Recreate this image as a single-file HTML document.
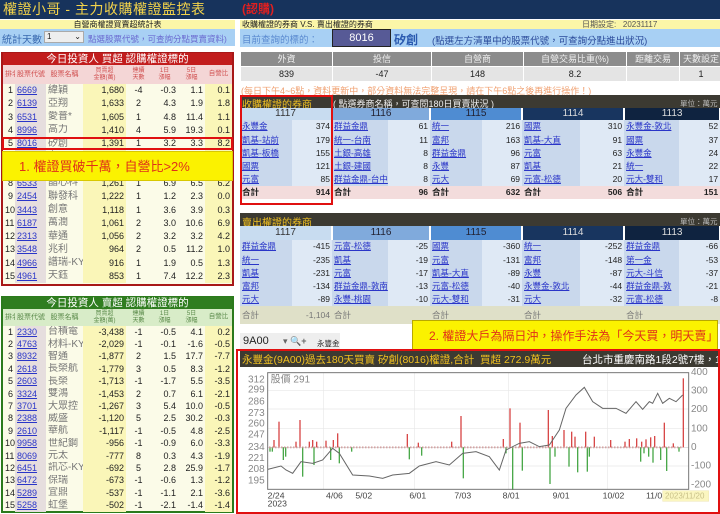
<!DOCTYPE html>
<html><head><meta charset="utf-8"><style>
*{margin:0;padding:0;box-sizing:border-box}
body{width:720px;height:514px;position:relative;overflow:hidden;background:#fff;font-family:"Liberation Sans","Noto Sans CJK TC",sans-serif;font-size:9px;color:#222}
.a{position:absolute}
table{border-collapse:collapse;table-layout:fixed}
td{padding:0 2px;white-space:nowrap;overflow:hidden;line-height:1}
.r{text-align:right}.c{text-align:center}
a{color:#2a35c8;text-decoration:underline}
.lt td{height:13.27px;font-size:9px}
.gt td{height:12.4px;font-size:9px}
.bk td{font-size:8.5px;height:13.2px}
.bk td.n{background:#c9d8ec}.bk td.v{background:#dfe9f5;text-align:right}
.bk tr.s td{background:#f3dcdc;font-weight:bold}
.sk tr.s td{background:#dfe0c8;color:#777;font-weight:normal}
</style></head><body>

<!-- title -->
<div class="a" style="left:0;top:0;width:720px;height:19px;background:#17335c"></div>
<div class="a" style="left:3px;top:1px;font-size:14px;line-height:17px;color:#f3d34a;letter-spacing:0.5px;white-space:nowrap">權證小哥 - 主力收購權證監控表</div>
<div class="a" style="left:242px;top:1px;font-size:12px;line-height:17px;color:#e02020;font-weight:bold">(認購)</div>

<!-- left top -->
<div class="a" style="left:0;top:20px;width:235px;height:9px;background:#fbf6a8;font-size:8px;line-height:9px;text-align:center">自營商權證買賣超統計表</div>
<div class="a" style="left:0;top:29px;width:235px;height:17px;background:#a8d0f4"></div>
<div class="a" style="left:2px;top:31px;font-size:10px;color:#3a6ab0">統計天數：</div>
<div class="a" style="left:44px;top:31px;width:40px;height:12px;background:#eee;border:1px solid #aaa;font-size:8px;padding-left:2px">1 <span style="float:right;padding-right:2px">⌄</span></div>
<div class="a" style="left:88px;top:33px;font-size:8.5px;color:#6a6ad0">點選股票代號，可查詢分點買賣資料)</div>

<!-- red table -->
<div class="a" style="left:1px;top:52px;width:233px;height:234px;border:2px solid #a81818;background:#fbfbe8"></div>
<div class="a" style="left:3px;top:53px;width:229px;height:12px;background:#c21d1d;color:#fff;font-size:10.5px;line-height:12px;text-align:center">今日投資人 買超 認購權證標的</div>
<table class="a lt" style="left:3px;top:65px;width:229px">
<colgroup><col style="width:12px"><col style="width:31px"><col style="width:37px"><col style="width:43px"><col style="width:25px"><col style="width:27px"><col style="width:27px"><col style="width:27px"></colgroup>
<tr style="background:#f4d6d6;color:#d05050;font-size:6.5px"><td style="height:19px;font-size:7px" class="c">排名</td><td class="c" style="font-size:7px">股票代號</td><td class="c" style="font-size:7px">股票名稱</td><td class="c" style="font-size:6px;line-height:1.1">買賣超<br>金額(萬)</td><td class="c" style="font-size:6px;line-height:1.1">連續<br>天數</td><td class="c" style="font-size:6px;line-height:1.1">1日<br>漲幅</td><td class="c" style="font-size:6px;line-height:1.1">5日<br>漲幅</td><td class="c" style="font-size:6.5px">自營比</td></tr>
<tbody id="rt"></tbody>
</table>
<div class="a" style="left:2px;top:137px;width:231px;height:13px;border:2px solid #e01010"></div>
<div class="a" style="left:2px;top:151px;width:231px;height:30px;background:#fbf200;border:1px solid #d8c800;color:#e0301a;font-size:13px;line-height:30px;padding-left:16px">1. 權證買破千萬，自營比&gt;2%</div>

<!-- green table -->
<div class="a" style="left:1px;top:296px;width:233px;height:217px;border:2px solid #2b7a1c;background:#fbfbe8"></div>
<div class="a" style="left:3px;top:297px;width:229px;height:12px;background:#2f7d1f;color:#fff;font-size:10.5px;line-height:12px;text-align:center">今日投資人 賣超 認購權證標的</div>
<table class="a gt" style="left:3px;top:309px;width:229px">
<colgroup><col style="width:12px"><col style="width:31px"><col style="width:37px"><col style="width:43px"><col style="width:25px"><col style="width:27px"><col style="width:27px"><col style="width:27px"></colgroup>
<tr style="background:#d8ecc8;color:#5a8a4a"><td style="height:17px;font-size:7px" class="c">排名</td><td class="c" style="font-size:7px">股票代號</td><td class="c" style="font-size:7px">股票名稱</td><td class="c" style="font-size:6px;line-height:1.1">買賣超<br>金額(萬)</td><td class="c" style="font-size:6px;line-height:1.1">連續<br>天數</td><td class="c" style="font-size:6px;line-height:1.1">1日<br>漲幅</td><td class="c" style="font-size:6px;line-height:1.1">5日<br>漲幅</td><td class="c" style="font-size:6.5px">自營比</td></tr>
<tbody id="gt"></tbody>
</table>

<!-- right top -->
<div class="a" style="left:240px;top:20px;width:480px;height:9px;background:#fbf6a8;font-size:8px;line-height:9px;padding-left:2px">收購權證的券商 V.S. 賣出權證的券商<span style="position:absolute;left:342px;color:#555">日期設定:&nbsp;&nbsp;&nbsp;20231117</span></div>
<div class="a" style="left:240px;top:29px;width:480px;height:18px;background:#a8d0f4"></div>
<div class="a" style="left:242px;top:32px;font-size:9.5px;color:#5a8ad0">目前查詢的標的：</div>
<div class="a" style="left:332px;top:29px;width:59px;height:18px;background:#575a96;border:1px solid #222;color:#fff;font-size:11px;line-height:16px;text-align:center">8016</div>
<div class="a" style="left:394px;top:31px;font-size:12px;color:#2a5ab0;font-weight:bold">矽創</div>
<div class="a" style="left:432px;top:33px;font-size:9.5px;color:#2a4a9a">(點選左方清單中的股票代號，可查詢分點進出狀況)</div>

<table class="a" style="left:240px;top:51px;width:480px;border-collapse:separate;border-spacing:1px 1px">
<colgroup><col style="width:91px"><col style="width:98px"><col style="width:91px"><col style="width:102px"><col style="width:52px"><col style="width:42px"></colgroup>
<tr style="background:#8c8c8c;color:#eee;font-size:9px"><td class="c" style="height:14px">外資</td><td class="c">投信</td><td class="c">自營商</td><td class="c">自營交易比重(%)</td><td class="c">距離交易</td><td class="c">天數設定</td></tr>
<tr style="background:#e4e4e4;font-size:9px"><td class="c" style="height:14px">839</td><td class="c">-47</td><td class="c">148</td><td class="c">8.2</td><td></td><td class="c">1</td></tr>
</table>
<div class="a" style="left:241px;top:84px;font-size:9px;color:#f0a070">(每日下午4~6點，資料更新中，部分資料無法完整呈現，請在下午6點之後再進行操作！)</div>

<!-- buy -->
<div class="a" style="left:240px;top:95px;width:480px;height:13px;background:#3c3a32"></div>
<div class="a" style="left:242px;top:96px;font-size:10px;color:#f0c020">收購權證的券商</div>
<div class="a" style="left:333px;top:97px;font-size:9px;color:#eee">( 點選券商名稱，可查閱180日買賣狀況 )</div>
<div class="a" style="left:680px;top:98px;font-size:7.5px;color:#bbb">單位：萬元</div>
<table class="a bk" id="buy" style="left:240px;top:108px;width:480px"></table>
<div class="a" style="left:240px;top:95px;width:93px;height:110px;border:2px solid #e01010"></div>

<!-- sell -->
<div class="a" style="left:240px;top:213px;width:480px;height:13px;background:#3c3a32"></div>
<div class="a" style="left:242px;top:214px;font-size:10px;color:#f0c020">賣出權證的券商</div>
<div class="a" style="left:680px;top:216px;font-size:7.5px;color:#bbb">單位：萬元</div>
<table class="a bk sk" id="sell" style="left:240px;top:226px;width:480px"></table>

<!-- search -->
<div class="a" style="left:240px;top:333px;width:100px;height:16px;background:#eee"></div>
<div class="a" style="left:243px;top:335px;font-size:11px">9A00</div>
<div class="a" style="left:283px;top:336px;font-size:9px;color:#666">▾ <span style="color:#6a8ac0">🔍</span><b>+</b></div>
<div class="a" style="left:317px;top:338px;font-size:7.5px">永豐金</div>
<div class="a" style="left:412px;top:320px;width:306px;height:30px;background:#fbf200;border:1px solid #b8a800;color:#e0301a;font-size:12px;line-height:30px;padding-left:16px">2. 權證大戶為隔日沖，操作手法為「今天買，明天賣」</div>

<!-- chart -->
<div class="a" style="left:240px;top:351px;width:480px;height:16px;background:#3c3a32"></div>
<div class="a" style="left:242px;top:352px;font-size:10.5px;color:#f0c020;white-space:nowrap">永豐金(9A00)過去180天買賣 矽創(8016)權證,合計&nbsp;&nbsp;買超 272.9萬元</div>
<div class="a" style="left:582px;top:352px;font-size:10.5px;color:#fff;white-space:nowrap">台北市重慶南路1段2號7樓，1</div>
<div class="a" style="left:236px;top:349px;width:484px;height:165px;border:2px solid #e01010"></div>
<svg class="a" style="left:236px;top:360px" width="484" height="154" viewBox="0 0 1452 462">
<g stroke="#e8e8e8" stroke-width="2">
<line x1="95" y1="92" x2="1358" y2="92"/><line x1="95" y1="147" x2="1358" y2="147"/><line x1="95" y1="205" x2="1358" y2="205"/><line x1="95" y1="318" x2="1358" y2="318"/>
<line x1="262" y1="38" x2="262" y2="388"/><line x1="535" y1="38" x2="535" y2="388"/><line x1="818" y1="38" x2="818" y2="388"/><line x1="1115" y1="38" x2="1115" y2="388"/>
</g>
<line x1="95" y1="262" x2="1358" y2="262" stroke="#ccc" stroke-width="2"/>
<g id="bars"></g>
<polyline fill="none" stroke="#666" stroke-width="3" points="95,328 135,318 150,330 170,340 195,305 230,310 260,300 290,265 310,280 350,345 400,348 440,355 470,345 520,340 550,318 600,305 640,315 680,280 720,275 760,290 790,330 810,270 850,250 880,245 910,260 940,255 970,210 990,145 1020,105 1045,82 1070,125 1100,145 1140,145 1170,160 1200,125 1220,148 1240,125 1250,130 1265,100 1280,130 1300,115 1320,125 1340,105"/>
<rect x="95" y="38" width="1263" height="350" fill="none" stroke="#777" stroke-width="3"/>
<g font-size="30" fill="#888" font-family="Liberation Sans, Noto Sans CJK TC, sans-serif">
<text x="104" y="68">股價 291</text>
<g text-anchor="end"><text x="86" y="68">312</text><text x="86" y="98">299</text><text x="86" y="133">286</text><text x="86" y="168">273</text><text x="86" y="200">260</text><text x="86" y="233">247</text><text x="86" y="270">234</text><text x="86" y="303">221</text><text x="86" y="336">208</text><text x="86" y="370">195</text></g>
<text x="1365" y="45">400</text><text x="1365" y="100">300</text><text x="1365" y="156">200</text><text x="1365" y="214">100</text><text x="1365" y="270">0</text><text x="1365" y="326">-100</text><text x="1365" y="382">-200</text>
</g>
<g font-size="26" fill="#444" font-family="Liberation Sans, sans-serif">
<text x="95" y="415">2/24</text><text x="95" y="440">2023</text><text x="270" y="415">4/06</text><text x="358" y="415">5/02</text><text x="520" y="415">6/01</text><text x="655" y="415">7/03</text><text x="800" y="415">8/01</text><text x="950" y="415">9/01</text><text x="1100" y="415">10/02</text><text x="1230" y="415">11/0</text>
</g>
<rect x="1280" y="392" width="138" height="32" fill="#fbf6c0" stroke="#e8dca0"/>
<text x="1287" y="416" font-size="24" fill="#c8c088" font-family="Liberation Sans, sans-serif">2023/11/20</text>
</svg>

<script>
function row(d,i){var h='<tr><td class="r">'+d[0]+'</td><td style="background:#e6dede"><a>'+d[1]+'</a></td><td style="color:#777;font-size:10px">'+d[2]+'</td><td class="r" style="background:#faf6b8">'+d[3]+'</td><td class="c">'+d[4]+'</td><td class="r">'+d[5]+'</td><td class="r">'+d[6]+'</td><td class="r" style="background:#faf6b8">'+d[7]+'</td></tr>';return h}
var R=[[1,'6669','緯穎','1,680',-4,'-0.3','1.1','0.1'],[2,'6139','亞翔','1,633',2,'4.3','1.9','1.8'],[3,'6531','愛普*','1,605',1,'4.8','11.4','1.1'],[4,'8996','高力','1,410',4,'5.9','19.3','0.1'],[5,'8016','矽創','1,391',1,'3.2','3.3','8.2'],[6,'3529','力旺','1,300',1,'2.0','3.0','3.0'],[7,'3661','世芯','1,280',1,'2.0','3.0','3.0'],[8,'6533','晶心科','1,261',1,'6.9','6.5','6.2'],[9,'2454','聯發科','1,222',1,'1.2','2.3','0.0'],[10,'3443','創意','1,118',1,'3.6','3.9','0.3'],[11,'6187','萬潤','1,061',2,'3.0','10.6','6.9'],[12,'2313','華通','1,056',2,'3.2','3.2','4.2'],[13,'3548','兆利','964',2,'0.5','11.2','1.0'],[14,'4966','譜瑞-KY','916',1,'1.9','0.5','1.3'],[15,'4961','天鈺','853',1,'7.4','12.2','2.3']];
var G=[[1,'2330','台積電','-3,438',-1,'-0.5','4.1','0.2'],[2,'4763','材料-KY','-2,029',-1,'-0.1','-1.6','-0.5'],[3,'8932','智通','-1,877',2,'1.5','17.7','-7.7'],[4,'2618','長榮航','-1,779',3,'0.5','8.3','-1.2'],[5,'2603','長榮','-1,713',-1,'-1.7','5.5','-3.5'],[6,'3324','雙鴻','-1,453',2,'0.7','6.1','-2.1'],[7,'3701','大眾控','-1,267',3,'5.4','10.0','-0.5'],[8,'2388','威盛','-1,120',5,'2.5','30.2','-0.3'],[9,'2610','華航','-1,117',-1,'-0.5','4.8','-2.5'],[10,'9958','世紀鋼','-956',-1,'-0.9','6.0','-3.3'],[11,'8069','元太','-777',8,'0.3','4.3','-1.9'],[12,'6451','訊芯-KY','-692',5,'2.8','25.9','-1.7'],[13,'6472','保瑞','-673',-1,'-0.6','1.3','-1.2'],[14,'5289','宜鼎','-537',-1,'-1.1','2.1','-3.6'],[15,'5258','虹堡','-502',-1,'-2.1','-1.4','-1.4']];
document.getElementById('rt').innerHTML=R.map(row).join('');
document.getElementById('gt').innerHTML=G.map(row).join('');
var hc=['#c8dcf0','#80aadc','#4f8cd2','#18355f','#0f2340'],tc=['#333','#223','#223','#ddd','#ddd'],ds=['1117','1116','1115','1114','1113'];
function bk(id,rows,sums,sumh){var h='<colgroup>';for(var i=0;i<5;i++){var w=i==3?102:(i==0?92:(i==1?98:(i==2?92:96)));h+='<col style="width:'+Math.round(w*0.57)+'px"><col style="width:'+(w-Math.round(w*0.57))+'px">'}h+='</colgroup><tr>';for(i=0;i<5;i++)h+='<td colspan="2" class="c" style="height:'+(id=='buy'?12:14)+'px;font-size:10px;background:'+hc[i]+';color:'+tc[i]+';border-right:2px solid #fff">'+ds[i]+'</td>';h+='</tr>';rows.forEach(function(r){h+='<tr>';r.forEach(function(c){h+='<td class="n"><a>'+c[0]+'</a></td><td class="v">'+c[1]+'</td>'});h+='</tr>'});h+='<tr class="s">';sums.forEach(function(s){h+='<td style="height:'+sumh+'px">合計</td><td class="r">'+s+'</td>'});h+='</tr>';document.getElementById(id).innerHTML=h}
bk('buy',[[['永豐金',374],['群益金鼎',61],['統一',216],['國票',310],['永豐金-敦北',52]],[['凱基-站前',179],['統一-台南',11],['富邦',163],['凱基-大直',91],['國票',37]],[['凱基-板橋',155],['土銀-高雄',8],['群益金鼎',96],['元富',63],['永豐金',24]],[['國票',121],['土銀-建國',8],['永豐',87],['凱基',21],['統一',22]],[['元富',85],['群益金鼎-台中',8],['元大',69],['元富-松德',20],['元大-雙和',17]]],[914,96,632,506,151],13);
bk('sell',[[['群益金鼎',-415],['元富-松德',-25],['國票',-360],['統一',-252],['群益金鼎',-66]],[['統一',-235],['凱基',-19],['元富',-131],['富邦',-148],['第一金',-53]],[['凱基',-231],['元富',-17],['凱基-大直',-89],['永豐',-87],['元大-斗信',-37]],[['富邦',-134],['群益金鼎-敦南',-13],['元富-松德',-40],['永豐金-敦北',-44],['群益金鼎-敦',-21]],[['元大',-89],['永豐-桃園',-10],['元大-雙和',-31],['元大',-32],['元富-松德',-8]]],['-1,104','','','',''],18);
var red=[[112,240],[127,185],[178,245],[190,180],[218,245],[228,240],[240,245],[268,242],[290,240],[303,220],[512,222],[545,248],[645,245],[673,168],[800,237],[820,145],[850,188],[935,150],[947,228],[982,210],[1005,215],[1015,230],[1047,215],[1073,230],[1122,240],[1165,245],[1178,237],[1200,235],[1215,245],[1228,238],[1242,232],[1254,228],[1283,188],[1310,250],[1340,55]];
var grn=[[100,275],[107,275],[140,300],[147,290],[198,350],[232,315],[282,300],[308,310],[345,275],[518,298],[555,287],[680,355],[808,280],[828,390],[857,332],[940,372],[955,290],[997,320],[1023,337],[1052,335],[1058,290],[1212,305],[1222,280],[1236,290],[1249,308],[1272,300],[1290,333],[1327,275]];
var s='';red.forEach(function(b){s+='<rect x="'+b[0]+'" y="'+b[1]+'" width="4" height="'+(262-b[1])+'" fill="#d84848"/>'});grn.forEach(function(b){s+='<rect x="'+b[0]+'" y="262" width="4" height="'+(b[1]-262)+'" fill="#4aa84a"/>'});
for(var x=100;x<1340;x+=9){s+='<rect x="'+x+'" y="259" width="3" height="6" fill="#c88"/>'}
document.getElementById('bars').innerHTML=s;
</script>
</body></html>
